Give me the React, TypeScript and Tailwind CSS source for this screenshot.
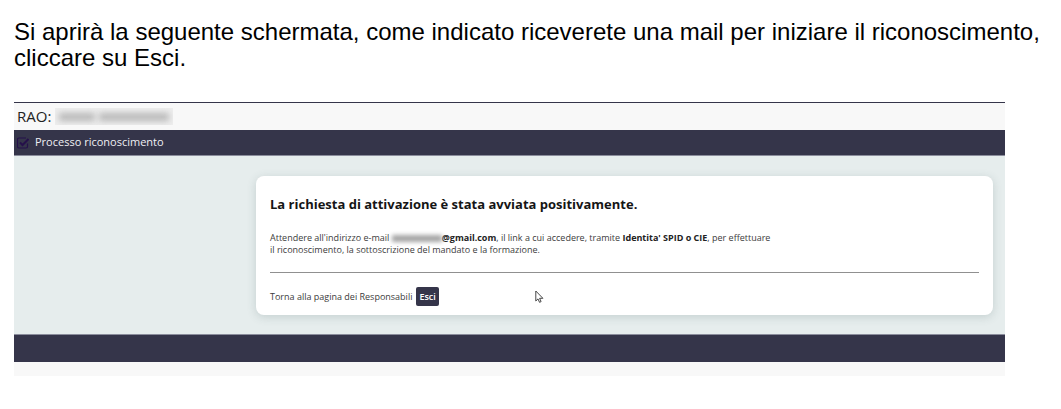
function CheckIcon() {
  return (
    <svg className="h-3 w-3 shrink-0" viewBox="0 0 12 12" fill="none" stroke="#25104a">
      <path d="M10.5 6.5v3A1.5 1.5 0 0 1 9 11H2A1.5 1.5 0 0 1 .5 9.5v-7A1.5 1.5 0 0 1 2 1h7" strokeWidth="1.2" />
      <path d="M3 5.5L5.500 8l6-6" strokeWidth="2" />
    </svg>
  );
}

function CursorIcon() {
  return (
    <svg className="h-[13px] w-[9px]" viewBox="0 0 9 13" fill="#fff" stroke="#333" strokeWidth="0.9">
      <path d="M.8 1v10L3 8.900l1.500 3.400 1.600-.7-1.500-3.300h3.300z" />
    </svg>
  );
}

function HiddenName() {
  return (
    <span className="flex h-[17px] w-[118px] items-center gap-1 overflow-hidden bg-[#eeeeee] px-1" aria-label="nome nascosto">
      <span className="h-2 w-9 bg-[#b8b8b8] blur-[3px]" />
      <span className="h-2 w-[70px] bg-[#b8b8b8] blur-[3px]" />
    </span>
  );
}

export default function App() {
  return (
    <div className="min-h-screen bg-white pt-[19px] pb-8 font-['Open_Sans',sans-serif]">
      <p className="pr-4 pl-[14px] font-['Liberation_Sans',Arial,sans-serif] text-[24px] leading-[26px] text-black">
        Si aprirà la seguente schermata, come indicato riceverete una mail per iniziare il riconoscimento, cliccare su Esci.
      </p>

      <div className="mt-[31px] mr-14 ml-[14px] border-t border-[#35354a] bg-[#f8f8f8]">
        {/* Header */}
        <header className="flex h-[27px] items-center gap-1 pl-[3px] text-[15px] text-[#222]">
          <span>RAO:</span>
          <HiddenName />
        </header>
        <nav className="flex h-[26px] items-center gap-1.5 border-b border-[#8b8d9c] bg-[#35354a] pl-[3px] text-[11px] text-[#f0f0f4]">
          <CheckIcon />
          <span>Processo riconoscimento</span>
        </nav>

        {/* Content */}
        <main className="bg-[#e6eded] pt-5 pr-3 pb-[19px] pl-[242px]">
          <section className="rounded-lg bg-white px-[14px] pt-[18px] pb-[9px] shadow-[0_2px_10px_rgba(60,90,90,0.2)]">
            <h1 className="text-[13px] leading-5 font-bold text-[#151515]">
              La richiesta di attivazione è stata avviata positivamente.
            </h1>
            <p className="mt-[18px] max-w-[520px] text-[9px] leading-3 text-[#3c3c3c]">
              Attendere all'indirizzo e-mail{" "}
              <span className="inline-block h-[7px] w-[50px] bg-[#a5a5a5] align-middle blur-[2px]" aria-label="indirizzo nascosto" />
              <b className="text-[#222]">@gmail.com</b>, il link a cui accedere, tramite{" "}
              <b className="text-[#222]">Identita' SPID o CIE</b>, per effettuare
              <br />
              il riconoscimento, la sottoscrizione del mandato e la formazione.
            </p>
            <hr className="mt-4 border-[#909090]" />
            <div className="mt-[14px] flex items-center text-[9px] leading-3 text-[#3c3c3c]">
              <span>Torna alla pagina dei Responsabili</span>
              <button type="button" className="ml-1 h-[19px] rounded-xs bg-[#35354a] px-[3px] font-semibold text-white">
                Esci
              </button>
              <span className="ml-24">
                <CursorIcon />
              </span>
            </div>
          </section>
        </main>

        <footer>
          <div className="h-7 border-t border-[#8b8d9c] bg-[#35354a]" />
          <div className="h-[14px]" />
        </footer>
      </div>
    </div>
  );
}
